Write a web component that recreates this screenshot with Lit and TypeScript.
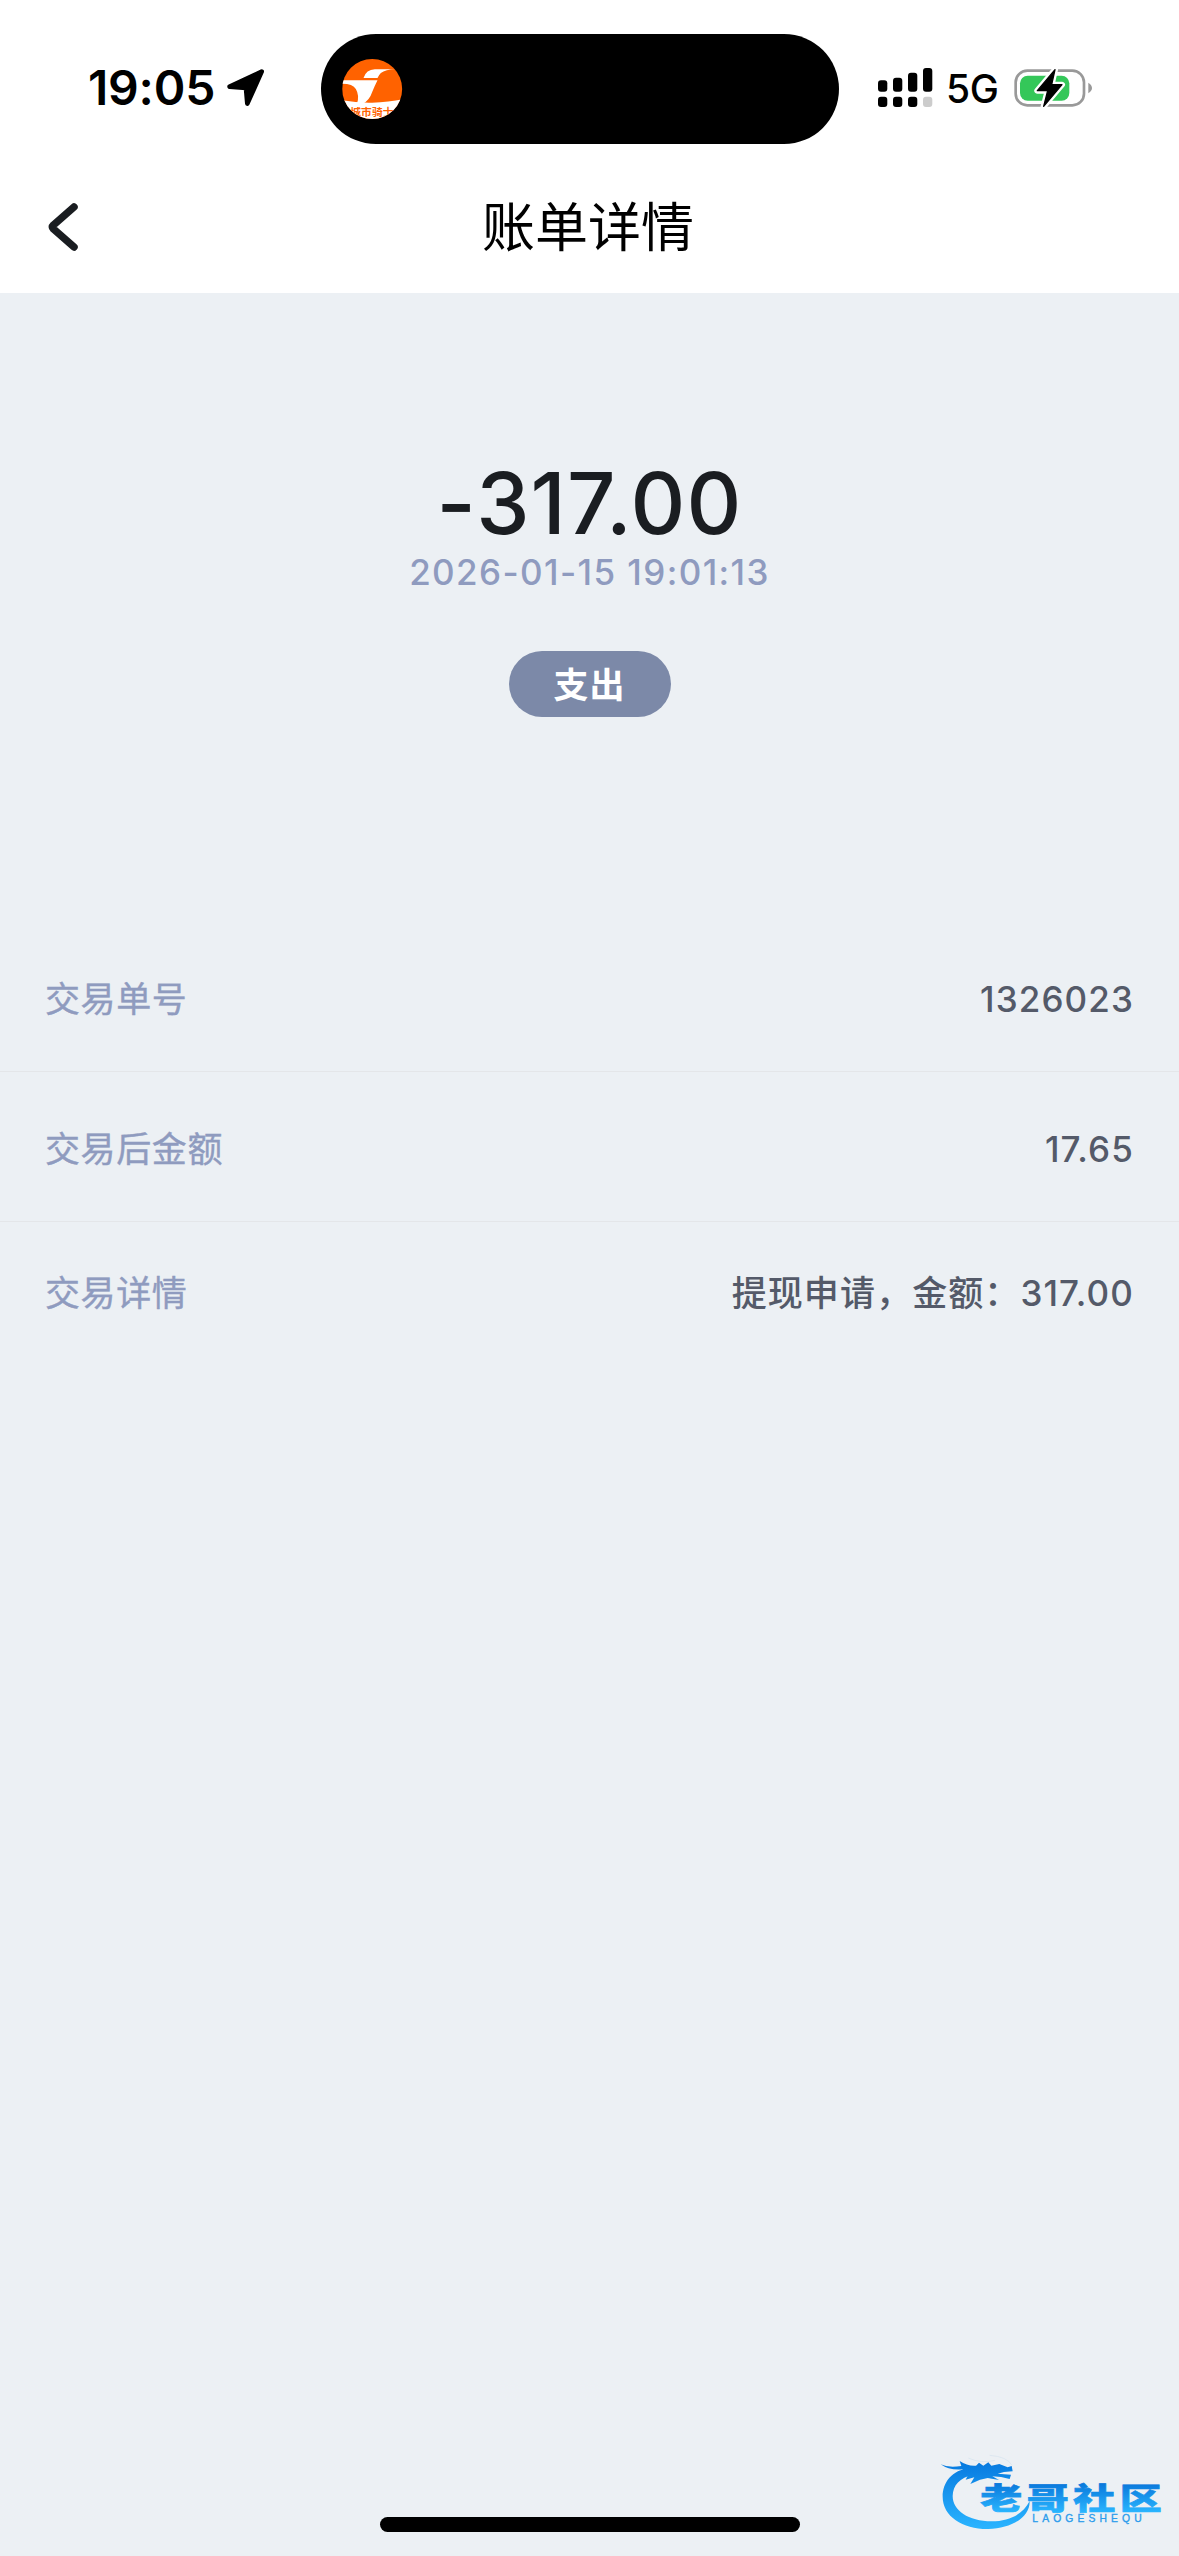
import { LitElement, html, css } from 'lit';
import { customElement, property } from 'lit/decorators.js';

@customElement('status-bar')
class StatusBar extends LitElement {
  static styles = css`
    :host {
      display: grid;
      grid-template-columns: 321px 518px 1fr;
      height: 144px;
      padding-top: 34px;
      box-sizing: border-box;
      color: #000;
    }

    svg {
      display: block;
      flex: none;
    }

    .left {
      display: flex;
      align-items: center;
      padding-left: 88px;
      gap: 13px;
      height: 108px;
    }

    .time {
      font-size: 48px;
      font-weight: 600;
      line-height: 48px;
      width: 126px;
      letter-spacing: -0.2px;
      white-space: nowrap;
    }

    .island {
      height: 110px;
      border-radius: 55px;
      background: #000;
      display: flex;
      align-items: center;
      padding-left: 21px;
      box-sizing: border-box;
    }

    .right {
      display: flex;
      align-items: center;
      padding-left: 39px;
      height: 108px;
    }

    .network {
      font-size: 39px;
      font-weight: 500;
      line-height: 40px;
      width: 53px;
      margin: 2px 0 0 12px;
      letter-spacing: -0.4px;
      white-space: nowrap;
    }

    .battery {
      margin-left: 15px;
    }

    .brand {
      font-family: 'Noto Sans CJK SC', sans-serif;
      font-weight: 700;
    }
  `;

  render() {
    return html`
      <div class="left">
        <span class="time">19:05</span>
        <svg width="37" height="38" viewBox="0 0 111 114">
          <path d="M104 8 L8 53 L57 57 L61 104 Z" fill="#000" stroke="#000" stroke-width="14" stroke-linejoin="round" />
        </svg>
      </div>
      <div class="island">
        <svg width="61" height="60" viewBox="0 0 182 180">
          <defs>
            <clipPath id="round"><ellipse cx="90" cy="90" rx="90" ry="90" /></clipPath>
          </defs>
          <g clip-path="url(#round)">
            <rect width="182" height="180" fill="#ff6200" />
            <path d="M0 124 Q45 132 90 131 Q140 130 182 121 V180 H0 Z" fill="#fff" />
            <path d="M0 64 H106 Q98 80 91 97 Q82 125 60 136 H44 Q53 110 41 90 Q32 74 0 74 Z" fill="#fff" />
            <path d="M64 57 Q72 32 98 31 H160 Q130 32 116 42 Q110 48 106 57 Z" fill="#fff" />
            <text class="brand" x="24" y="170" font-size="32" textLength="130" fill="#ff6200">城市骑士</text>
          </g>
        </svg>
      </div>
      <div class="right">
        <svg width="56" height="40" viewBox="0 0 56 40">
          <rect x="0" y="12.3" width="9.3" height="11.4" rx="3" />
          <rect x="15" y="9.7" width="9.3" height="14" rx="3" />
          <rect x="30" y="4.7" width="9.3" height="19" rx="3" />
          <rect x="45" y="0" width="9.3" height="23.7" rx="3" />
          <rect x="0" y="28.7" width="9.3" height="10.3" rx="3" />
          <rect x="15" y="28.7" width="9.3" height="10.3" rx="3" />
          <rect x="30" y="28.7" width="9.3" height="10.3" rx="3" />
          <rect x="45" y="28.7" width="9.3" height="10.3" rx="3" fill="#ccc" />
        </svg>
        <span class="network">5G</span>
        <svg class="battery" width="80" height="40" viewBox="0 0 240 120">
          <rect x="5" y="8" width="205" height="104" rx="35" fill="none" stroke="#999" stroke-width="8" />
          <path d="M223 44 Q234 51 234 60 Q234 69 223 76 Z" fill="#999" />
          <rect x="18" y="23" width="148" height="75" rx="23" fill="#34c759" />
          <path d="M123 5 L70 68 H101 L89 115 L144 50 H113 Z" fill="#000" stroke="#fff" stroke-width="18" stroke-linejoin="round" />
          <path d="M123 5 L70 68 H101 L89 115 L144 50 H113 Z" fill="#000" stroke="#000" stroke-width="4" stroke-linejoin="round" />
        </svg>
      </div>
    `;
  }
}

@customElement('bill-row')
class BillRow extends LitElement {
  static styles = css`
    :host {
      display: flex;
      align-items: center;
      justify-content: space-between;
      height: 150px;
      padding: 4px 45px 0 45px;
      box-sizing: border-box;
      border-bottom: 1px solid #e4e6e9;
      font-size: 35px;
      line-height: 50px;
      letter-spacing: 0.6px;
    }

    :host([last]) {
      height: 137px;
      border-bottom: none;
    }

    .label {
      color: #8f9bbf;
      -webkit-text-stroke: 0.4px #8f9bbf;
    }

    .value {
      color: #545a69;
      font-weight: 500;
      letter-spacing: 1.1px;
    }
  `;

  @property() label = '';
  @property() value = '';

  render() {
    return html`
      <span class="label">${this.label}</span>
      <span class="value">${this.value}</span>
    `;
  }
}

@customElement('site-watermark')
class SiteWatermark extends LitElement {
  static styles = css`
    :host {
      display: block;
    }

    svg {
      display: block;
    }

    .name {
      font-family: 'Noto Sans CJK SC', sans-serif;
      font-weight: 900;
    }

    .latin {
      font-family: 'Liberation Sans', sans-serif;
    }
  `;

  render() {
    return html`
      <svg width="259" height="116" viewBox="0 0 777 348">
        <defs>
          <linearGradient id="ring" gradientUnits="userSpaceOnUse" x1="0" y1="70" x2="0" y2="265">
            <stop offset="0" stop-color="#087be0" />
            <stop offset="1" stop-color="#2ab4ff" />
          </linearGradient>
          <linearGradient id="name" x1="0" y1="0.15" x2="0" y2="0.9">
            <stop offset="0" stop-color="#0672d8" />
            <stop offset="1" stop-color="#2ab6ff" />
          </linearGradient>
        </defs>
        <path
          d="M150 84 C95 90 68 128 68 170 C68 230 130 268 205 267 C275 265 330 232 329 183 C310 222 268 244 215 244 C145 243 98 212 98 168 C99 135 119 113 160 104 Z"
          fill="url(#ring)"
        />
        <path
          d="M62 73 Q84 84 124 78 L119 63 Q143 79 168 77 L177 68 L190 77 L205 67 L214 77 L238 72 L263 82 L275 78 L278 94 L252 96 L233 101 L273 104 L269 117 L243 111 L217 109 L237 120 L203 114 L180 119 L151 132 L163 112 L137 119 L147 99 L116 103 L129 88 Q88 92 62 73 Z"
          fill="url(#ring)"
        />
        <path d="M145 54 Q184 72 225 61 M209 46 Q262 50 276 76" fill="none" stroke="#d5e2ee" stroke-width="2" />
        <g transform="translate(0 206) scale(1 0.71)">
          <text class="name" x="181" y="0" font-size="126" letter-spacing="13.5" fill="url(#name)" stroke="url(#name)" stroke-width="3">老哥社区</text>
        </g>
        <text class="latin" x="337" y="247" font-size="31" textLength="328" fill="#2b9cec" stroke="#2b9cec">LAOGESHEQU</text>
      </svg>
    `;
  }
}

@customElement('app-root')
class AppRoot extends LitElement {
  static styles = css`
    :host {
      display: flex;
      flex-direction: column;
      position: relative;
      width: 1179px;
      height: 2556px;
      overflow: hidden;
      background: #ecf0f4;
      font-family: Inter, 'Noto Sans CJK SC', sans-serif;
    }

    .top {
      background: #fff;
      height: 293px;
      flex: none;
    }

    .nav {
      display: grid;
      grid-template-columns: 120px 1fr 123px;
      align-items: center;
      height: 149px;
    }

    .back {
      display: block;
      margin: 17px 0 0 48px;
    }

    .title {
      margin: 18px 0 0;
      text-align: center;
      font-size: 53px;
      font-weight: 400;
      line-height: 60px;
      color: #000;
    }

    .summary {
      display: flex;
      flex-direction: column;
      align-items: center;
      height: 629px;
      padding-top: 161px;
      box-sizing: border-box;
      flex: none;
    }

    .amount {
      font-size: 85px;
      font-weight: 500;
      line-height: 100px;
      color: #1a1d21;
      letter-spacing: 1.1px;
      font-feature-settings: 'calt' 0;
    }

    .date {
      font-size: 35px;
      font-weight: 500;
      line-height: 36px;
      color: #8f9bbf;
      letter-spacing: 1.4px;
    }

    .kind {
      display: flex;
      align-items: center;
      justify-content: center;
      width: 162px;
      height: 66px;
      margin-top: 61px;
      padding-bottom: 3px;
      box-sizing: border-box;
      border-radius: 33px;
      background: #7c89a8;
      color: #fff;
      font-size: 35px;
      font-weight: 700;
      letter-spacing: 1px;
    }

    .home {
      width: 420px;
      height: 15px;
      margin: auto auto 24px;
      border-radius: 8px;
      background: #000;
    }

    .watermark {
      position: absolute;
      right: 0;
      bottom: 0;
    }
  `;

  rows = [
    { label: '交易单号', value: '1326023' },
    { label: '交易后金额', value: '17.65' },
    { label: '交易详情', value: '提现申请，金额：317.00' },
  ];

  render() {
    return html`
      <header class="top">
        <status-bar></status-bar>
        <div class="nav">
          <svg class="back" width="32" height="50" viewBox="0 0 32 50">
            <path d="M26 5 L5.500 23 Q3.500 25 5.500 27 L26 45" fill="none" stroke="#1a1d21" stroke-width="7.500" stroke-linecap="round" stroke-linejoin="round" />
          </svg>
          <h1 class="title">账单详情</h1>
        </div>
      </header>
      <section class="summary">
        <div class="amount">-317.00</div>
        <div class="date">2026-01-15 19:01:13</div>
        <div class="kind">支出</div>
      </section>
      ${this.rows.map((row, i) => html`
        <bill-row label=${row.label} value=${row.value} ?last=${i === this.rows.length - 1}></bill-row>
      `)}
      <div class="home"></div>
      <site-watermark class="watermark"></site-watermark>
    `;
  }
}
